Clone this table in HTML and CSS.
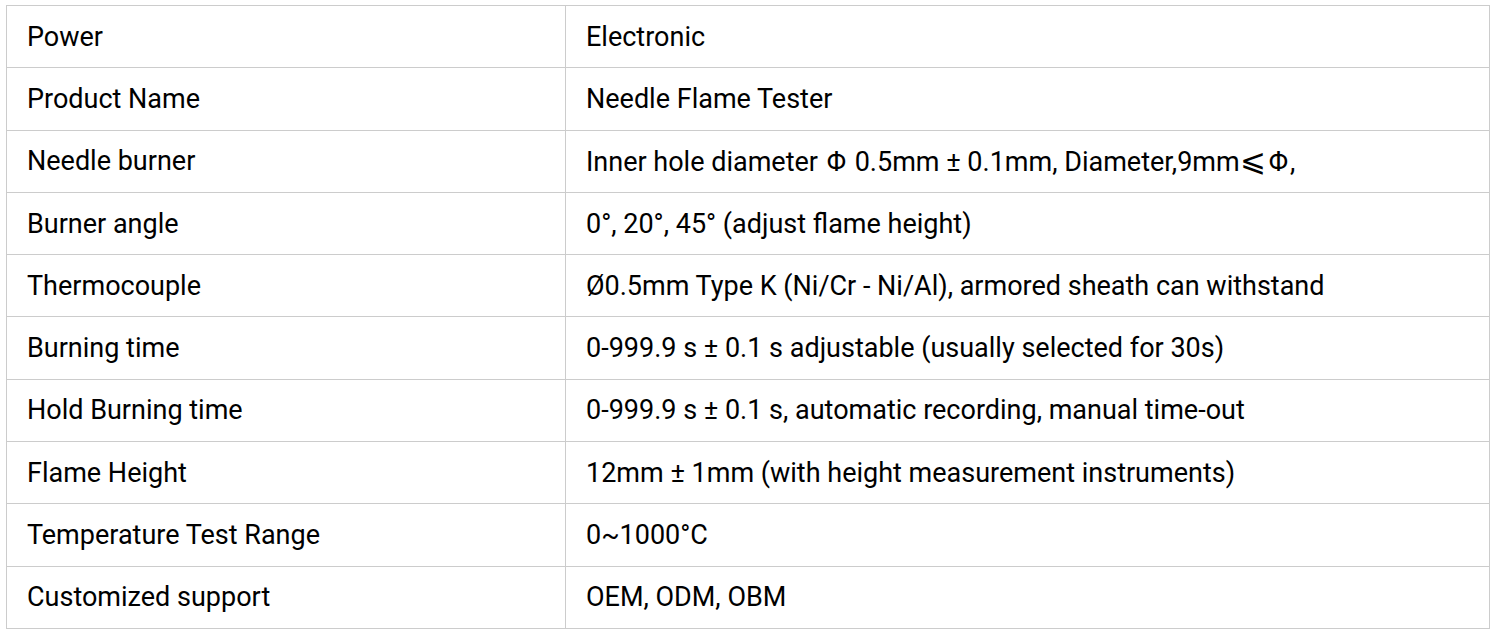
FILE: index.html
```html
<!DOCTYPE html>
<html lang="en">
<head>
<meta charset="utf-8">
<title>Needle Flame Tester</title>
<link rel="stylesheet" href="styles.css">
</head>
<body>
<table class="spec">
<tbody>
<tr><td class="k">Power</td><td class="v">Electronic</td></tr>
<tr><td class="k">Product Name</td><td class="v">Needle Flame Tester</td></tr>
<tr><td class="k">Needle burner</td><td class="v">Inner hole diameter <span class="phi">Φ</span> 0.5mm ± 0.1mm, Diameter,9mm<span class="le">⩽</span><span class="phi">Φ</span>,</td></tr>
<tr><td class="k">Burner angle</td><td class="v">0°, 20°, 45° (adjust flame height)</td></tr>
<tr><td class="k">Thermocouple</td><td class="v">Ø0.5mm Type K (Ni/Cr - Ni/Al), armored sheath can withstand</td></tr>
<tr><td class="k">Burning time</td><td class="v">0-999.9 s ± 0.1 s adjustable (usually selected for 30s)</td></tr>
<tr><td class="k">Hold Burning time</td><td class="v">0-999.9 s ± 0.1 s, automatic recording, manual time-out</td></tr>
<tr><td class="k">Flame Height</td><td class="v">12mm ± 1mm (with height measurement instruments)</td></tr>
<tr><td class="k">Temperature Test Range</td><td class="v">0~1000°C</td></tr>
<tr><td class="k">Customized support</td><td class="v">OEM, ODM, OBM</td></tr>
</tbody>
</table>
</body>
</html>
```
FILE: styles.css
```css
html, body {
  margin: 0;
  padding: 0;
  background: #fff;
}
body {
  padding: 5px 0 0 6px;
  font-family: Roboto, "Liberation Sans", Arial, sans-serif;
  color: #000;
}
.spec {
  border-collapse: collapse;
  width: 1484px;
  table-layout: fixed;
}
.spec td {
  border: 1px solid #cccccc;
  height: 62.3px;
  padding: 0 20px;
  font-size: 27px;
  line-height: 32px;
  vertical-align: middle;
  box-sizing: border-box;
}
.spec td.k {
  width: 559px;
}
.phi {
  margin: 0 2px;
}
.le {
  font-size: 31px;
  line-height: 1;
  margin: 0 0.5px;
}
```
